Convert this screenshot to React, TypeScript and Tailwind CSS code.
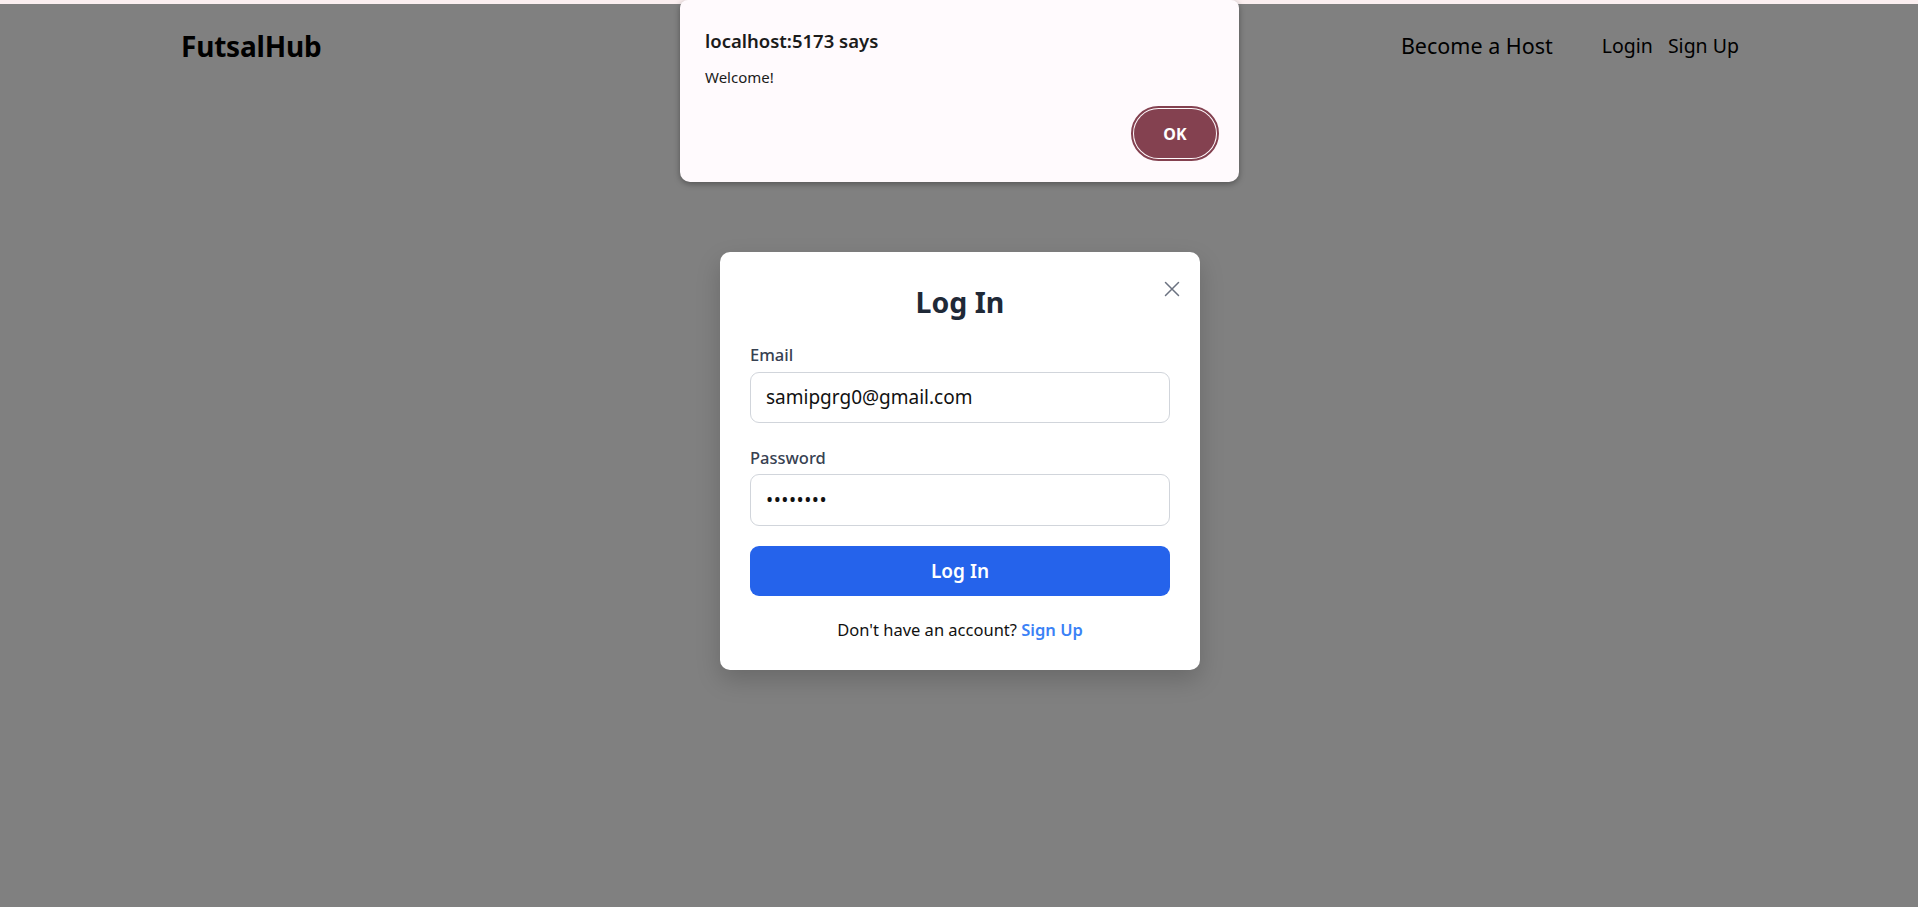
import React from "react";

const font = { fontFamily: '"Noto Sans", "Segoe UI", sans-serif' };

export default function App() {
  return (
    <div
      className="relative w-full h-[907px] overflow-hidden bg-[#808080] text-black"
      style={font}
    >
      <div className="h-[4px] w-full bg-[#fbeff0]" />
      {/* Header */}
      <header className="flex items-center justify-between pl-[181px] pr-[179px] h-[84px]">
        <div className="text-[28px] font-bold leading-none tracking-[-0.2px]">FutsalHub</div>
        <nav className="flex items-center">
          <a className="text-[21.5px] leading-none mr-[49px]">Become a Host</a>
          <a className="text-[19.5px] leading-none mr-[15px]">Login</a>
          <a className="text-[19.5px] leading-none">Sign Up</a>
        </nav>
      </header>

      {/* Browser alert */}
      <div className="absolute top-0 left-[680px] w-[559px] h-[182px] bg-[#fffafd] rounded-t-[8px] rounded-b-[10px] shadow-[0_2px_6px_rgba(0,0,0,0.35)] px-[25px]">
        <div className="pt-[28px] text-[18.5px] font-semibold leading-[26px] text-[#1b1b1b]">
          localhost:5173 says
        </div>
        <div className="mt-[13px] text-[15px] leading-[20px] text-[#1b1b1b]">Welcome!</div>
        <div className="flex justify-end mt-[22px] pr-[1px]">
          <button className="w-[82px] h-[49px] rounded-full bg-[#844150] text-white text-[16px] font-bold outline-2 outline-offset-[1px] outline-[#844150] mr-[-3px]">
            OK
          </button>
        </div>
      </div>

      {/* Login modal */}
      <div className="absolute inset-0 flex justify-center pt-[252px] pl-[2px] pointer-events-none">
        <div className="relative w-[480px] h-[418px] bg-white rounded-[10px] shadow-[0_10px_25px_rgba(0,0,0,0.18)] px-[30px] pt-[28px] pointer-events-auto">
          <svg
            className="absolute top-[29px] right-[20px]"
            width="16"
            height="16"
            viewBox="0 0 16 16"
            fill="none"
            stroke="#6b7280"
            strokeWidth="1.5"
            strokeLinecap="round"
          >
            <path d="M1.5 1.5 L14.5 14.5 M14.5 1.5 L1.5 14.5" />
          </svg>
          <h2 className="text-center text-[28.5px] font-bold leading-[45px] text-[#1f2937]">Log In</h2>

          <label className="block mt-[17px] text-[16.5px] font-medium leading-[25px] text-[#374151]">Email</label>
          <div className="mt-[5px] h-[51px] rounded-[9px] border border-[#d1d5db] flex items-center px-[15px]">
            <span className="text-[19px] text-[#111111] leading-none">samipgrg0@gmail.com</span>
          </div>

          <label className="block mt-[22px] text-[16.5px] font-medium leading-[25px] text-[#374151]">Password</label>
          <div className="mt-[4px] h-[52px] rounded-[9px] border border-[#d1d5db] flex items-center px-[15px]">
            <span className="text-[19px] text-[#111111] leading-none tracking-[0.5px]">••••••••</span>
          </div>

          <button className="mt-[20px] w-full h-[50px] rounded-[9px] bg-[#2563eb] text-white text-[19px] font-semibold">
            Log In
          </button>

          <p className="mt-[21px] text-center text-[16.5px] leading-[25px] text-[#111111]">
            Don't have an account?{" "}
            <span className="text-[#3b82f6] font-semibold">Sign Up</span>
          </p>
        </div>
      </div>
    </div>
  );
}
